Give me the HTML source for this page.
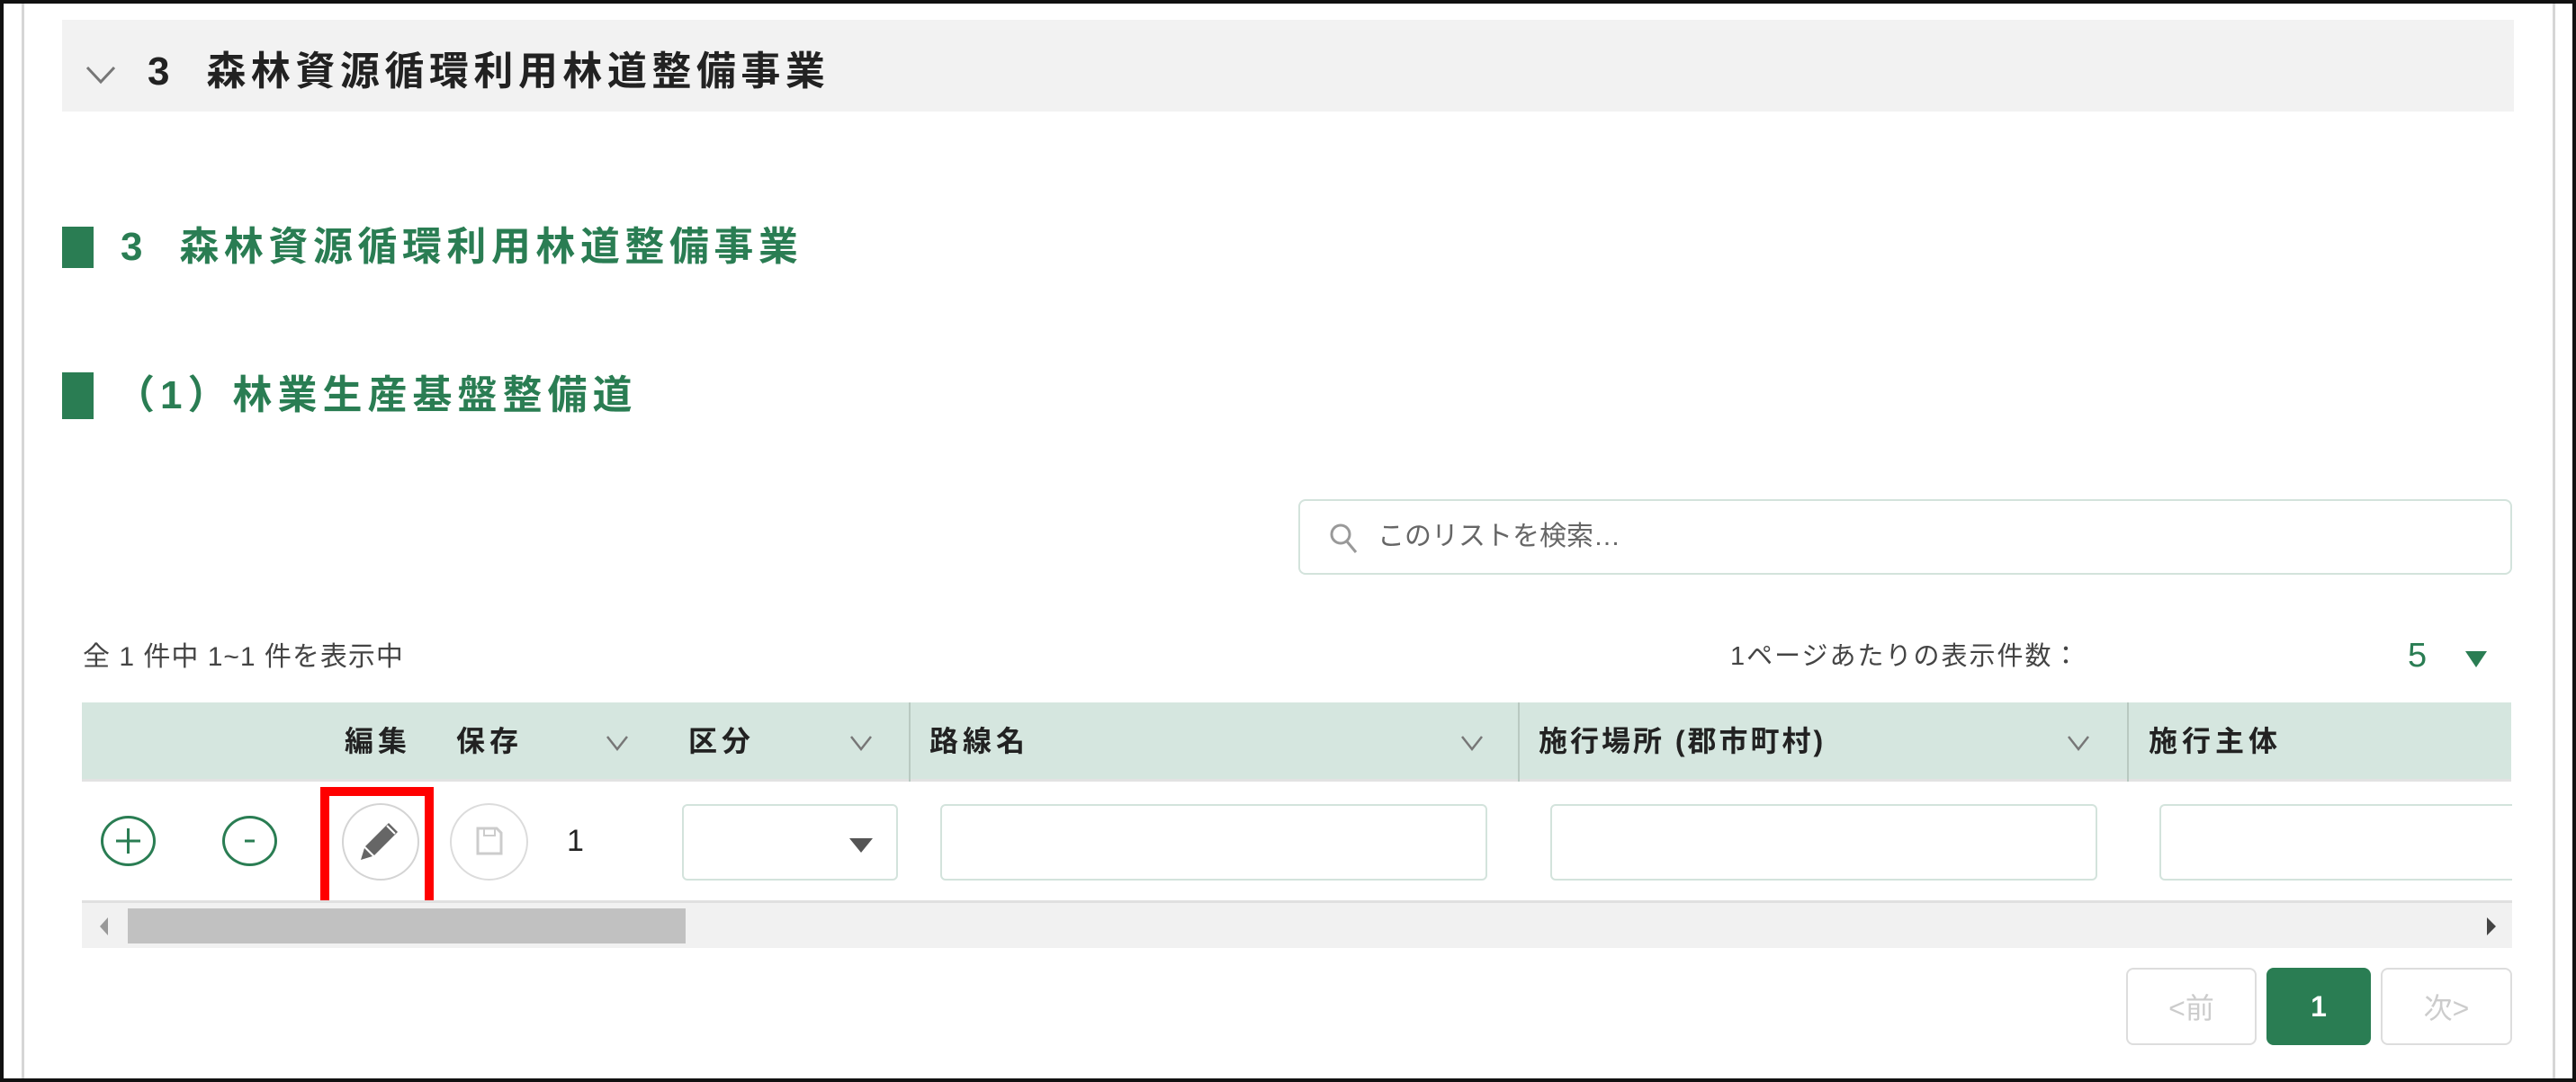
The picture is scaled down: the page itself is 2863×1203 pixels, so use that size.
<!DOCTYPE html>
<html><head><meta charset="utf-8">
<style>
*{margin:0;padding:0;box-sizing:border-box}
body{width:2863px;height:1203px;position:relative;background:#fff;overflow:hidden;font-family:"Liberation Sans","Noto Sans CJK JP",sans-serif;color:#333}
.a{position:absolute}
.frame{left:0;top:0;width:2863px;height:1203px;border:4px solid #111}
.vl{top:0;width:3px;height:1203px;background:#d6d6d6}
.hdr{left:69px;top:22px;width:2725px;height:102px;background:#f2f2f2}
.t{white-space:nowrap;line-height:1}
.bar{left:69px;width:35px;background:#2a7d53}
.gt{color:#2a7d53;font-weight:bold;font-size:44px;letter-spacing:5.5px}
.th{top:781px;height:88px;background:#d5e6df;left:91px;width:2700px;border-bottom:3px solid #e2e2e2}
.hl{font-weight:bold;font-size:32px;letter-spacing:5px;color:#222;top:808px}
.chev{top:816px}
.sep{top:781px;width:2px;height:88px;background:#b9c9c1}
.inp{border:2px solid #d3e3dc;border-radius:6px;background:#fff;top:894px;height:85px}
.circ{border-radius:50%}
.pg{top:1076px;height:86px;border:2px solid #ddd;border-radius:8px;font-size:32px;color:#ccc;display:flex;align-items:center;justify-content:center}
</style></head><body>
<div class="a vl" style="left:24px"></div>
<div class="a vl" style="left:2837px"></div>

<div class="a hdr"></div>
<svg class="a" style="left:94px;top:72px" width="36" height="22" viewBox="0 0 36 22"><path d="M3 3 L18 19 L33 3" fill="none" stroke="#777" stroke-width="3"/></svg>
<div class="a t" style="left:164px;top:58px;font-size:44px;font-weight:bold;color:#222;letter-spacing:5.5px">3&nbsp;&nbsp;森林資源循環利用林道整備事業</div>

<div class="a bar" style="top:252px;height:46px"></div>
<div class="a t gt" style="left:134px;top:253px">3&nbsp;&nbsp;森林資源循環利用林道整備事業</div>

<div class="a bar" style="top:414px;height:52px"></div>
<div class="a t gt" style="left:128px;top:418px;letter-spacing:6px">（1）林業生産基盤整備道</div>

<div class="a" style="left:1443px;top:555px;width:1349px;height:84px;border:2px solid #d3e3dc;border-radius:8px"></div>
<svg class="a" style="left:1476px;top:580px" width="36" height="38" viewBox="0 0 36 38"><circle cx="14" cy="14" r="10" fill="none" stroke="#999" stroke-width="3"/><path d="M21 22 L31 34" stroke="#999" stroke-width="3"/></svg>
<div class="a t" style="left:1531px;top:582px;font-size:30px;color:#666">このリストを検索…</div>

<div class="a t" style="left:92px;top:716px;font-size:30px;color:#444;letter-spacing:1px">全 1 件中 1~1 件を表示中</div>
<div class="a t" style="left:1923px;top:716px;font-size:29px;color:#444;letter-spacing:2px">1ページあたりの表示件数：</div>
<div class="a t" style="left:2676px;top:710px;font-size:38px;color:#2a7d53">5</div>
<svg class="a" style="left:2738px;top:722px" width="28" height="22" viewBox="0 0 28 22"><path d="M2 2 H26 L14 20 Z" fill="#2a7d53"/></svg>

<div class="a th"></div>
<div class="a t hl" style="left:383px">編集</div>
<div class="a t hl" style="left:507px">保存</div>
<svg class="a chev" style="left:672px" width="28" height="20" viewBox="0 0 28 20"><path d="M3 3 L14 17 L25 3" fill="none" stroke="#777" stroke-width="2.5"/></svg>
<div class="a t hl" style="left:765px">区分</div>
<svg class="a chev" style="left:943px" width="28" height="20" viewBox="0 0 28 20"><path d="M3 3 L14 17 L25 3" fill="none" stroke="#777" stroke-width="2.5"/></svg>
<div class="a sep" style="left:1010px"></div>
<div class="a t hl" style="left:1033px">路線名</div>
<svg class="a chev" style="left:1622px" width="28" height="20" viewBox="0 0 28 20"><path d="M3 3 L14 17 L25 3" fill="none" stroke="#777" stroke-width="2.5"/></svg>
<div class="a sep" style="left:1687px"></div>
<div class="a t hl" style="left:1710px;letter-spacing:3px">施行場所 (郡市町村)</div>
<svg class="a chev" style="left:2296px" width="28" height="20" viewBox="0 0 28 20"><path d="M3 3 L14 17 L25 3" fill="none" stroke="#777" stroke-width="2.5"/></svg>
<div class="a sep" style="left:2364px"></div>
<div class="a t hl" style="left:2388px">施行主体</div>

<div class="a circ" style="left:112px;top:907px;width:61px;height:56px;border:3px solid #2a7d53"></div>
<svg class="a" style="left:112px;top:907px" width="61" height="56"><path d="M30.5 14 V42 M17 28 H44" stroke="#2a7d53" stroke-width="3"/></svg>
<div class="a circ" style="left:247px;top:907px;width:61px;height:56px;border:3px solid #2a7d53"></div>
<svg class="a" style="left:247px;top:907px" width="61" height="56"><path d="M25 28 H36" stroke="#2a7d53" stroke-width="3"/></svg>

<div class="a circ" style="left:380px;top:893px;width:86px;height:86px;border:2px solid #d4d4d4"></div>
<svg class="a" style="left:380px;top:893px" width="86" height="86" viewBox="0 0 86 86"><path d="M52 22 L62 32 L36 58 L26 48 Z" fill="#666"/><path d="M25 50 L34 59 L21 63 Z" fill="#666"/><path d="M50 25 L59 34" stroke="#fff" stroke-width="2"/></svg>
<div class="a circ" style="left:500px;top:893px;width:87px;height:86px;border:2px solid #dcdcdc"></div>
<svg class="a" style="left:500px;top:893px" width="87" height="86" viewBox="0 0 87 86"><path d="M31 28 H52 L57 33 V56 H31 Z" fill="none" stroke="#ccc" stroke-width="3"/><path d="M38 28 V36 H50 V28" fill="none" stroke="#ccc" stroke-width="2"/></svg>
<div class="a t" style="left:630px;top:918px;font-size:34px;color:#222">1</div>

<div class="a" style="left:356px;top:875px;width:126px;height:137px;border:10px solid #ff0000"></div>

<div class="a inp" style="left:758px;width:240px"></div>
<svg class="a" style="left:942px;top:930px" width="30" height="20" viewBox="0 0 30 20"><path d="M2 2 H28 L15 18 Z" fill="#555"/></svg>
<div class="a inp" style="left:1045px;width:608px"></div>
<div class="a inp" style="left:1723px;width:608px"></div>
<div class="a inp" style="left:2400px;width:392px;border-right:none;border-radius:6px 0 0 6px"></div>

<div class="a" style="left:91px;top:1001px;width:2701px;height:53px;background:#f1f1f1;border-top:3px solid #e0e0e0"></div>
<div class="a" style="left:142px;top:1010px;width:620px;height:39px;background:#c1c1c1"></div>
<svg class="a" style="left:108px;top:1018px" width="14" height="24"><path d="M12 2 L3 12 L12 22 Z" fill="#999"/></svg>
<svg class="a" style="left:2762px;top:1018px" width="14" height="24"><path d="M2 2 L12 12 L2 22 Z" fill="#444"/></svg>

<div class="a pg" style="left:2363px;width:145px">&lt;前</div>
<div class="a pg" style="left:2519px;width:116px;background:#2a7d53;border-color:#2a7d53;color:#fff;font-weight:bold">1</div>
<div class="a pg" style="left:2646px;width:146px">次&gt;</div>

<div class="a frame"></div>
</body></html>
